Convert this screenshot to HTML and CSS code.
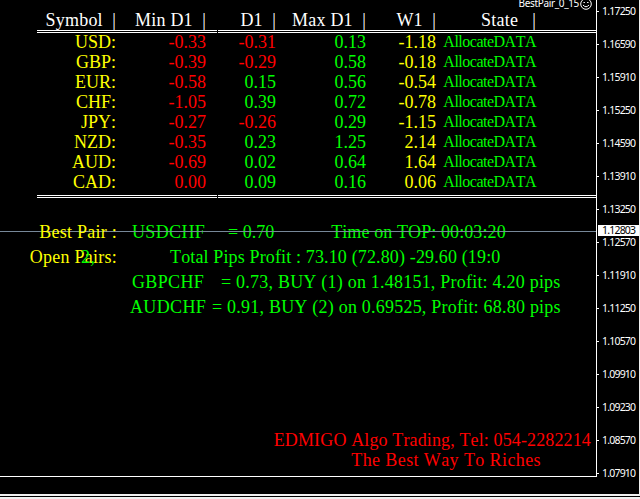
FILE: index.html
```
<!DOCTYPE html>
<html lang="en">

<head>
  <meta charset="UTF-8">
  <meta name="viewport" content="width=device-width, initial-scale=1.0">
  <title>BestPair_0_15</title>

  <link rel="stylesheet" href="styles.css">
</head>

<body>

  <div class="window">
    <main class="chart">
      <div class="price-line"></div>
      <div class="expert">
        <span>BestPair_0_15</span>
        <svg class="smiley" width="12" height="12" viewBox="0 0 12 12">
          <circle cx="6" cy="6" r="5.3" fill="none" stroke="#fff"/>
          <path d="M3.5 4.5h1.4M7.1 4.5h1.4M3 7Q6 10.5 9 7" fill="none" stroke="#fff"/>
        </svg>
      </div>

      <div class="row head">
        <span>Symbol  |</span><span>Min D1  |</span><span>D1  |</span><span>Max D1  |</span><span>W1  |</span><span>State   |</span>
      </div>
      <div class="rule"><i></i><i></i></div>
      <div class="rows">
        <div class="row"><b>USD:</b><span class="red">-0.33</span><span class="red">-0.31</span><span>0.13</span><span class="yellow">-1.18</span><span class="state">AllocateDATA</span></div>
        <div class="row"><b>GBP:</b><span class="red">-0.39</span><span class="red">-0.29</span><span>0.58</span><span class="yellow">-0.18</span><span class="state">AllocateDATA</span></div>
        <div class="row"><b>EUR:</b><span class="red">-0.58</span><span>0.15</span><span>0.56</span><span class="yellow">-0.54</span><span class="state">AllocateDATA</span></div>
        <div class="row"><b>CHF:</b><span class="red">-1.05</span><span>0.39</span><span>0.72</span><span class="yellow">-0.78</span><span class="state">AllocateDATA</span></div>
        <div class="row"><b>JPY:</b><span class="red">-0.27</span><span class="red">-0.26</span><span>0.29</span><span class="yellow">-1.15</span><span class="state">AllocateDATA</span></div>
        <div class="row"><b>NZD:</b><span class="red">-0.35</span><span>0.23</span><span>1.25</span><span class="yellow">2.14</span><span class="state">AllocateDATA</span></div>
        <div class="row"><b>AUD:</b><span class="red">-0.69</span><span>0.02</span><span>0.64</span><span class="yellow">1.64</span><span class="state">AllocateDATA</span></div>
        <div class="row"><b>CAD:</b><span class="red">0.00</span><span>0.09</span><span>0.16</span><span class="yellow">0.06</span><span class="state">AllocateDATA</span></div>
      </div>
      <div class="rule"><i></i><i></i></div>

      <div class="info">
        <div class="line best"><b>Best Pair :</b><span class="pair">USDCHF</span><span class="value">= 0.70</span><span class="time">Time on TOP: 00:03:20</span></div>
        <div class="line open"><b>Open Pairs:<em class="count">2,</em></b><span class="total">Total Pips Profit : 73.10 (72.80) -29.60 (19:0</span></div>
        <div class="line gbp"><b></b><span class="pair">GBPCHF</span><span class="value">= 0.73, BUY (1) on 1.48151, Profit: 4.20 pips</span></div>
        <div class="line aud"><b></b><span class="pair">AUDCHF</span><span class="value">= 0.91, BUY (2) on 0.69525, Profit: 68.80 pips</span></div>
      </div>

      <footer class="credit">
        <p class="contact">EDMIGO Algo Trading, Tel: 054-2282214</p>
        <p class="slogan">The Best Way To Riches</p>
      </footer>
    </main>

    <aside class="scale">
      <span>1.17250</span>
      <span>1.16590</span>
      <span>1.15910</span>
      <span>1.15250</span>
      <span>1.14590</span>
      <span>1.13910</span>
      <span>1.13250</span>
      <span>1.12570</span>
      <span>1.11910</span>
      <span>1.11250</span>
      <span>1.10570</span>
      <span>1.09910</span>
      <span>1.09230</span>
      <span>1.08570</span>
      <span>1.07910</span>
      <strong class="current">1.12803</strong>
    </aside>
  </div>
  <div class="frame"></div>

</body>

</html>
```
FILE: styles.css
```
* {
  box-sizing: border-box;
}

body {
  margin: 0;
  width: 640px;
  height: 499px;
  overflow: hidden;
  background: #000;
  color: #0f0;
  font: 18px/20px "Liberation Serif", "Times New Roman", serif;
  font-kerning: none;
  font-variant-ligatures: none;
}

b {
  font-weight: normal;
  color: #ff0;
}

p {
  margin: 0;
}

.window {
  display: flex;
  height: 494px;
  border-right: 1px solid #f0f0f0;
}

.chart {
  position: relative;
  display: flex;
  flex-direction: column;
  width: 597px;
  height: 477px;
  border-right: 1px solid #fff;
  border-bottom: 1px solid #fff;
}

.chart > * {
  flex: none;
}

.price-line {
  position: absolute;
  top: 231px;
  left: 0;
  width: 100%;
  height: 1px;
  background: #778899;
}

.expert {
  display: flex;
  justify-content: flex-end;
  gap: 1px;
  height: 10px;
  padding-right: 4px;
  color: #fff;
  font: 10px/12px "Noto Sans", sans-serif;
  letter-spacing: -0.35px;
}

.expert span {
  margin-top: -3px;
}

.smiley {
  margin-top: -2px;
}

/* table */
.row {
  display: grid;
  grid-template-columns: 116px 90px 70px 90px 70px 100px;
  height: 20px;
  text-align: right;
  white-space: pre;
}

.head {
  color: #fff;
  letter-spacing: 0.2px;
}

.rule {
  display: flex;
  gap: 1px;
  height: 3px;
  padding-left: 37px;
}

.rule i {
  flex: 1;
  border: solid #fff;
  border-width: 1px 0;
}

.rule i:first-child {
  flex: none;
  width: 180px;
}

.rows {
  margin-top: -1px;
  margin-bottom: 3px;
}

.state {
  font-size: 16px;
  letter-spacing: -0.5px;
}

.red {
  color: #f00;
}

.yellow {
  color: #ff0;
}

/* pairs */
.info {
  margin-top: 22px;
}

.line {
  display: flex;
  height: 25px;
  line-height: 25px;
  white-space: pre;
}

.line b {
  position: relative;
  width: 117px;
  letter-spacing: 0.25px;
  text-align: right;
}

.count {
  position: absolute;
  left: 81px;
  color: #0f0;
  font-style: normal;
}

.pair {
  width: 96px;
  margin-left: 15px;
  letter-spacing: 0.35px;
}

.time {
  margin-left: 57px;
  letter-spacing: 0.1px;
}

.total {
  margin-left: 53px;
  letter-spacing: 0.14px;
}

.gbp .value {
  margin-left: -7px;
  letter-spacing: 0.22px;
}

.aud .pair {
  margin-left: 13px;
  width: 82px;
}

.aud .value {
  letter-spacing: 0.22px;
}

/* bottom */
.credit {
  width: 591px;
  margin-top: 110px;
  color: #f00;
  text-align: right;
}

.contact {
  letter-spacing: 0.13px;
}

.slogan {
  padding-right: 50px;
  letter-spacing: 0.4px;
}

/* price scale */
.scale {
  position: relative;
  width: 42px;
  margin-top: -5px;
  color: #fff;
  font: 10.5px/33px "Noto Sans", sans-serif;
  letter-spacing: -0.8px;
}

.scale span {
  display: flex;
  align-items: center;
  gap: 3px;
  height: 33px;
}

.scale span::before {
  content: '';
  width: 2px;
  height: 1px;
  background: #fff;
}

.current {
  position: absolute;
  top: 230px;
  left: 1px;
  width: 41px;
  height: 11px;
  padding-left: 4px;
  background: #fff;
  color: #000;
  font-weight: normal;
  line-height: 11px;
}

/* window edge */
.frame {
  height: 5px;
  background: linear-gradient(#f0f0f0 2px, #000 2px, #000 3px, #f0f0f0 3px);
}
```
